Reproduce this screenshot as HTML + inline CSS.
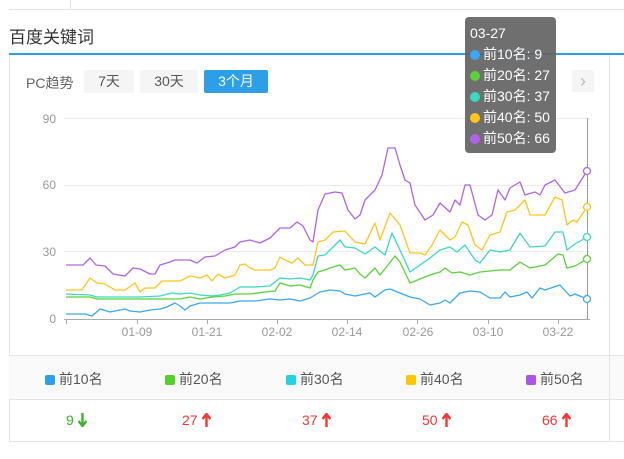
<!DOCTYPE html><html><head><meta charset="utf-8"><style>
body{margin:0;width:624px;height:459px;background:#fff;font-family:"Liberation Sans","Noto Sans CJK SC",sans-serif;position:relative;overflow:hidden}
.a{position:absolute}
.btn{position:absolute;top:70px;height:23px;line-height:23px;text-align:center;font-size:14px;border-radius:2px;background:#f5f5f5;color:#555}
.lg{position:absolute;top:369px;font-size:14px;color:#555}
.lg i{display:inline-block;width:10px;height:10px;border-radius:2px;margin-right:4px;vertical-align:-1px}
.v{position:absolute;top:412px;font-size:14px;color:#f33}
.v svg{vertical-align:-2px;margin-left:4px}
.t i{display:inline-block;width:10px;height:10px;border-radius:50%;margin-right:3px;vertical-align:-1px}
</style></head><body>
<div class="a" style="left:9px;top:0;width:615px;height:9px;border-bottom:1px solid #e4e4e4"></div>
<div class="a" style="left:70px;top:0;width:1px;height:9px;background:#e4e4e4"></div>
<div class="a" style="left:9px;top:23px;font-size:17px;color:#333">百度关键词</div>
<div class="a" style="left:9px;top:53px;width:615px;height:2px;background:#2d9fe8"></div>
<div class="a" style="left:9px;top:55px;width:1px;height:386px;background:#e4e4e4"></div>
<div class="a" style="left:609px;top:55px;width:1px;height:386px;background:#e4e4e4"></div>
<div class="a" style="left:26px;top:73px;font-size:14px;color:#666">PC趋势</div>
<div class="btn" style="left:84px;width:50px">7天</div>
<div class="btn" style="left:140px;width:58px">30天</div>
<div class="btn" style="left:204px;width:64px;background:#2d9fe8;color:#fff">3个月</div>
<div class="a" style="left:572px;top:70px;width:22px;height:22px;background:#f5f5f5;color:#bbb;font-size:18px;text-align:center;line-height:22px">›</div>
<svg class="a" style="left:0;top:0" width="624" height="459">
<g stroke="#ececec" stroke-width="1"><line x1="64" y1="118.5" x2="590" y2="118.5"/><line x1="64" y1="185.5" x2="590" y2="185.5"/><line x1="64" y1="251.5" x2="590" y2="251.5"/></g>
<g fill="#999" font-size="12" text-anchor="end" font-family="Liberation Sans"><text x="56" y="123">90</text><text x="56" y="189">60</text><text x="56" y="256">30</text><text x="56" y="323">0</text></g>
<line x1="64" y1="319.5" x2="590" y2="319.5" stroke="#aaa"/>
<g stroke="#aaa"><line x1="66.5" y1="319" x2="66.5" y2="324"/><line x1="137.5" y1="319" x2="137.5" y2="324"/><line x1="207.5" y1="319" x2="207.5" y2="324"/><line x1="277.5" y1="319" x2="277.5" y2="324"/><line x1="347.5" y1="319" x2="347.5" y2="324"/><line x1="417.5" y1="319" x2="417.5" y2="324"/><line x1="488.5" y1="319" x2="488.5" y2="324"/><line x1="558.5" y1="319" x2="558.5" y2="324"/></g>
<g fill="#999" font-size="12" text-anchor="middle" font-family="Liberation Sans"><text x="137" y="336">01-09</text><text x="207" y="336">01-21</text><text x="277" y="336">02-02</text><text x="347" y="336">02-14</text><text x="418" y="336">02-26</text><text x="488" y="336">03-10</text><text x="558" y="336">03-22</text></g>
<line x1="587.5" y1="118" x2="587.5" y2="319" stroke="#999"/>
<g fill="none" stroke-width="1.3" stroke-linejoin="round">
<polyline stroke="#b063e8" points="66,265 83,265 90,258 96,265 105,266 113,274 125,276 133,268 140,269 150,274 155,274 160,265 170,262 175,260 190,260 197,263 205,257 215,256 225,250 235,247 240,242 250,240 260,243 270,238 280,228 290,228 297,222 303,226 310,240 313,242 318,210 325,194 335,192 342,193 348,210 355,219 360,215 365,200 375,190 382,175 388,148 395,148 400,165 405,180 410,183 415,205 425,220 433,215 440,203 450,212 455,200 460,205 465,185 470,185 478,215 485,220 492,215 498,190 505,200 510,188 520,182 525,195 535,192 540,195 545,185 555,180 565,193 575,190 587,171"/>
<polyline stroke="#ffc61a" points="66,290 82,290 90,278 97,283 105,284 115,290 125,290 135,283 140,292 145,288 155,288 162,281 180,281 190,276 200,278 207,275 212,281 218,274 225,278 235,275 240,265 245,264 250,268 255,270 270,270 275,268 280,257 285,260 292,263 298,258 305,265 313,265 318,242 325,240 333,232 345,231 355,242 365,244 375,223 380,240 390,213 400,225 410,253 420,253 425,255 432,245 440,230 450,240 455,237 462,222 468,225 475,245 482,250 490,235 500,232 507,212 515,210 525,200 530,215 545,215 555,197 562,200 567,225 573,220 577,222 587,207"/>
<polyline stroke="#3ad9c0" points="66,294 90,295 97,297 125,297 140,297 160,296 172,293 180,294 190,293 200,295 212,296 220,295 230,293 240,287 255,287 270,286 280,278 290,279 300,278 310,280 313,275 318,256 325,255 330,250 340,240 345,247 355,248 365,254 375,247 385,255 392,233 400,250 410,272 420,265 430,258 440,250 450,247 457,252 465,245 475,260 480,263 490,250 500,252 510,250 520,233 530,247 545,246 555,232 563,232 567,250 575,244 587,237"/>
<polyline stroke="#5ad13a" points="66,297 90,297 97,299 125,299 180,299 190,297 200,299 212,297 225,296 235,294 250,294 265,292 275,291 280,283 290,286 300,285 310,288 313,280 318,272 325,270 330,268 340,265 345,270 355,268 360,274 365,278 375,268 380,275 388,265 395,256 400,262 410,283 420,279 430,275 440,272 445,268 452,273 460,272 470,275 480,272 490,271 500,270 510,270 520,262 530,268 545,265 558,254 563,255 567,268 575,266 587,259"/>
<polyline stroke="#3aa8f0" points="66,314 85,314 92,316 100,309 110,312 120,310 125,309 130,311 140,312 150,310 160,309 167,307 175,303 180,306 185,310 190,306 200,303 215,303 230,303 240,301 255,301 270,299 280,300 290,299 300,301 310,298 320,292 330,290 340,291 345,294 355,296 370,293 375,297 385,290 390,289 400,293 410,297 420,299 430,305 440,303 445,300 450,303 460,293 470,291 480,292 490,298 500,298 505,292 510,297 520,295 527,292 532,298 540,288 545,290 560,285 570,296 575,294 587,299"/>
</g>
<g fill="#fff" stroke-width="1.3"><circle cx="587" cy="171" r="3.5" stroke="#b063e8"/><circle cx="587" cy="207" r="3.5" stroke="#ffc61a"/><circle cx="587" cy="237" r="3.5" stroke="#3ad9c0"/><circle cx="587" cy="259" r="3.5" stroke="#5ad13a"/><circle cx="587" cy="299" r="3.5" stroke="#3aa8f0"/></g>
</svg>
<div class="a t" style="left:465px;top:17px;width:91px;height:136px;background:rgba(100,100,100,.93);border-radius:4px;color:#fff;font-size:14px;line-height:21px;padding:6px 0 0 5px;box-sizing:border-box">
03-27<br><i style="background:#3aa8f0"></i>前10名: 9<br><i style="background:#5ad13a"></i>前20名: 27<br><i style="background:#3ad9c0"></i>前30名: 37<br><i style="background:#ffc61a"></i>前40名: 50<br><i style="background:#b063e8"></i>前50名: 66</div>
<div class="a" style="left:9px;top:355px;width:615px;height:43px;background:#fafafa;border-top:1px solid #e4e4e4;border-bottom:1px solid #e4e4e4"></div>
<div class="a" style="left:609px;top:355px;width:1px;height:86px;background:#e4e4e4"></div>
<div class="a" style="left:9px;top:441px;width:615px;height:1px;background:#e4e4e4"></div>
<div class="lg" style="left:45px"><i style="background:#2d9fe8"></i>前10名</div>
<div class="lg" style="left:165px"><i style="background:#52d12a"></i>前20名</div>
<div class="lg" style="left:286px"><i style="background:#1fd3e0"></i>前30名</div>
<div class="lg" style="left:406px"><i style="background:#fcc600"></i>前40名</div>
<div class="lg" style="left:526px"><i style="background:#a855e8"></i>前50名</div>
<div class="v" style="left:66px;color:#3cb52a">9<svg width="9" height="14"><path d="M4.5 0V13M0.5 8L4.5 13L8.5 8" fill="none" stroke="#3cb52a" stroke-width="2.4"/></svg></div>
<div class="v" style="left:182px">27<svg width="9" height="14"><path d="M4.5 14V1M0.5 6L4.5 1L8.5 6" fill="none" stroke="#f33" stroke-width="2.4"/></svg></div>
<div class="v" style="left:302px">37<svg width="9" height="14"><path d="M4.5 14V1M0.5 6L4.5 1L8.5 6" fill="none" stroke="#f33" stroke-width="2.4"/></svg></div>
<div class="v" style="left:422px">50<svg width="9" height="14"><path d="M4.5 14V1M0.5 6L4.5 1L8.5 6" fill="none" stroke="#f33" stroke-width="2.4"/></svg></div>
<div class="v" style="left:542px">66<svg width="9" height="14"><path d="M4.5 14V1M0.5 6L4.5 1L8.5 6" fill="none" stroke="#f33" stroke-width="2.4"/></svg></div>
</body></html>
